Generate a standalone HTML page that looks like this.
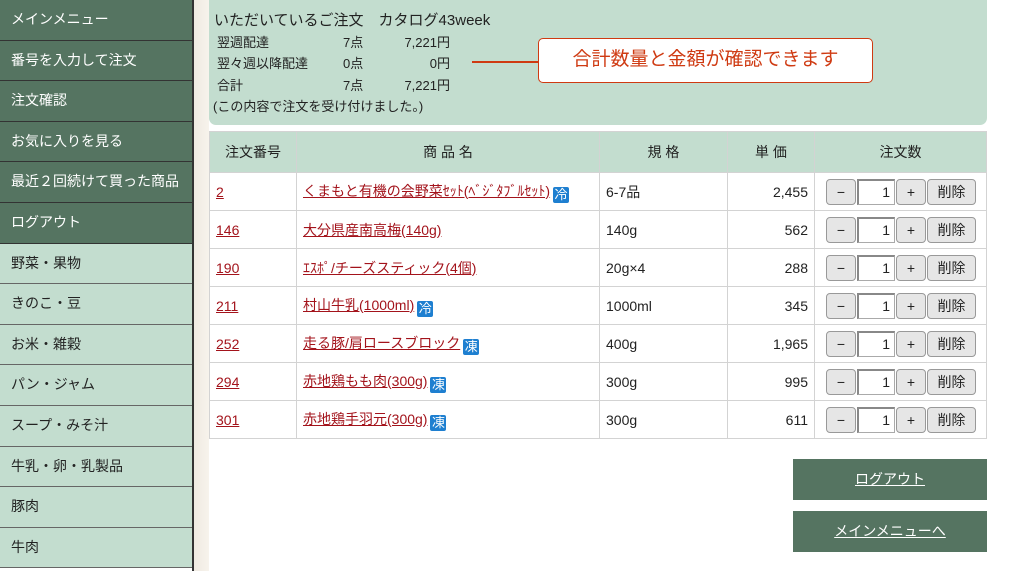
<!DOCTYPE html>
<html><head><meta charset="utf-8"><style>
*{margin:0;padding:0;box-sizing:border-box}
body{width:1012px;height:571px;overflow:hidden;background:#fff;font-family:"Liberation Sans","Noto Sans CJK JP",sans-serif;color:#222;position:relative}
.side{position:absolute;left:0;top:0;width:194px;height:571px;border-right:2px solid #333}
.side div{height:40.6px;line-height:39px;padding-left:11px;font-size:14px;border-bottom:1.6px solid #333}
.side .d{background:#557461;color:#fff}
.side .l{background:#c3ddcf;color:#222;border-bottom:1px solid #666}
.strip{position:absolute;left:194px;top:0;width:15px;height:571px;background:linear-gradient(90deg,#efeae2,#f7f3ec)}
.sum{position:absolute;left:209px;top:0;width:778px;height:125px;background:#c3ddcf;border-radius:0 0 7px 7px;font-size:13px}
.sum .t{position:absolute;left:5px;top:9px;font-size:15px}
.sum span{position:absolute;white-space:nowrap}
.call{position:absolute;left:538px;top:38px;width:335px;height:45px;background:#fff;border:1.5px solid #cf3a12;border-radius:5px;color:#cf3a12;font-size:19px;text-align:center;line-height:42px}
.line{position:absolute;left:472px;top:61px;width:66px;height:2px;background:#cf3a12}
table{position:absolute;left:209px;top:131px;width:778px;border-collapse:collapse;font-size:14px}
td,th{border:1px solid #d3d3d3;height:38px;padding:0 6px}
th{background:#c3ddcf;font-weight:normal;height:41px;font-size:14px}
a{color:#a3131b;text-decoration:underline}
.n{text-align:right}
.ic{display:inline-block;width:16px;height:16px;background:#1e7fd0;color:#fff;font-size:13px;line-height:16px;text-align:center;vertical-align:-3px;margin-left:3px;border-radius:2px}
.q{display:flex;align-items:center;gap:1px;padding-left:5px}
.b{height:26px;border:1px solid #999;border-radius:4px;background:#e6e6e6;font-size:14px;text-align:center;line-height:24px}
.in{width:38px;height:26px;border:1px solid #aaa;border-left:2px solid #888;border-top:2px solid #888;background:#fff;text-align:right;padding-right:4px;line-height:23px;font-size:14px}
.btn{position:absolute;left:793px;width:194px;height:41px;background:#557461;color:#fff;text-align:center;line-height:40px;font-size:14px;text-decoration:underline}
</style></head><body>
<div class="side">
<div class="d">メインメニュー</div><div class="d">番号を入力して注文</div><div class="d">注文確認</div><div class="d">お気に入りを見る</div><div class="d">最近２回続けて買った商品</div><div class="d">ログアウト</div>
<div class="l">野菜・果物</div><div class="l">きのこ・豆</div><div class="l">お米・雑穀</div><div class="l">パン・ジャム</div><div class="l">スープ・みそ汁</div><div class="l">牛乳・卵・乳製品</div><div class="l">豚肉</div><div class="l">牛肉</div>
</div>
<div class="strip"></div>
<div class="sum">
<div class="t">いただいているご注文　カタログ43week</div>
<div style="position:absolute;left:8px;top:32px;width:260px;height:80px">
<span style="left:0;top:0">翌週配達</span><span style="left:126px;top:0">7点</span><span style="right:27px;top:0">7,221円</span>
<span style="left:0;top:21px">翌々週以降配達</span><span style="left:126px;top:21px">0点</span><span style="right:27px;top:21px">0円</span>
<span style="left:0;top:43px">合計</span><span style="left:126px;top:43px">7点</span><span style="right:27px;top:43px">7,221円</span>
<span style="left:-4px;top:64px">(この内容で注文を受け付けました。)</span>
</div>
</div>
<div class="line"></div>
<div class="call">合計数量と金額が確認できます</div>
<table>
<tr><th style="width:87px">注文番号</th><th style="width:303px">商 品 名</th><th style="width:128px">規 格</th><th style="width:87px">単 価</th><th>注文数</th></tr>
<tr><td><a>2</a></td><td><a>くまもと有機の会野菜ｾｯﾄ(ﾍﾞｼﾞﾀﾌﾞﾙｾｯﾄ)</a><span class="ic">冷</span></td><td>6-7品</td><td class="n">2,455</td><td><div class="q"><div class="b" style="width:30px">−</div><div class="in">1</div><div class="b" style="width:30px">+</div><div class="b" style="width:49px">削除</div></div></td></tr>
<tr><td><a>146</a></td><td><a>大分県産南高梅(140g)</a></td><td>140g</td><td class="n">562</td><td><div class="q"><div class="b" style="width:30px">−</div><div class="in">1</div><div class="b" style="width:30px">+</div><div class="b" style="width:49px">削除</div></div></td></tr>
<tr><td><a>190</a></td><td><a>ｴｽﾎﾟ/チーズスティック(4個)</a></td><td>20g×4</td><td class="n">288</td><td><div class="q"><div class="b" style="width:30px">−</div><div class="in">1</div><div class="b" style="width:30px">+</div><div class="b" style="width:49px">削除</div></div></td></tr>
<tr><td><a>211</a></td><td><a>村山牛乳(1000ml)</a><span class="ic">冷</span></td><td>1000ml</td><td class="n">345</td><td><div class="q"><div class="b" style="width:30px">−</div><div class="in">1</div><div class="b" style="width:30px">+</div><div class="b" style="width:49px">削除</div></div></td></tr>
<tr><td><a>252</a></td><td><a>走る豚/肩ロースブロック</a><span class="ic">凍</span></td><td>400g</td><td class="n">1,965</td><td><div class="q"><div class="b" style="width:30px">−</div><div class="in">1</div><div class="b" style="width:30px">+</div><div class="b" style="width:49px">削除</div></div></td></tr>
<tr><td><a>294</a></td><td><a>赤地鶏もも肉(300g)</a><span class="ic">凍</span></td><td>300g</td><td class="n">995</td><td><div class="q"><div class="b" style="width:30px">−</div><div class="in">1</div><div class="b" style="width:30px">+</div><div class="b" style="width:49px">削除</div></div></td></tr>
<tr><td><a>301</a></td><td><a>赤地鶏手羽元(300g)</a><span class="ic">凍</span></td><td>300g</td><td class="n">611</td><td><div class="q"><div class="b" style="width:30px">−</div><div class="in">1</div><div class="b" style="width:30px">+</div><div class="b" style="width:49px">削除</div></div></td></tr>
</table>
<div class="btn" style="top:459px">ログアウト</div>
<div class="btn" style="top:511px">メインメニューへ</div>
</body></html>
